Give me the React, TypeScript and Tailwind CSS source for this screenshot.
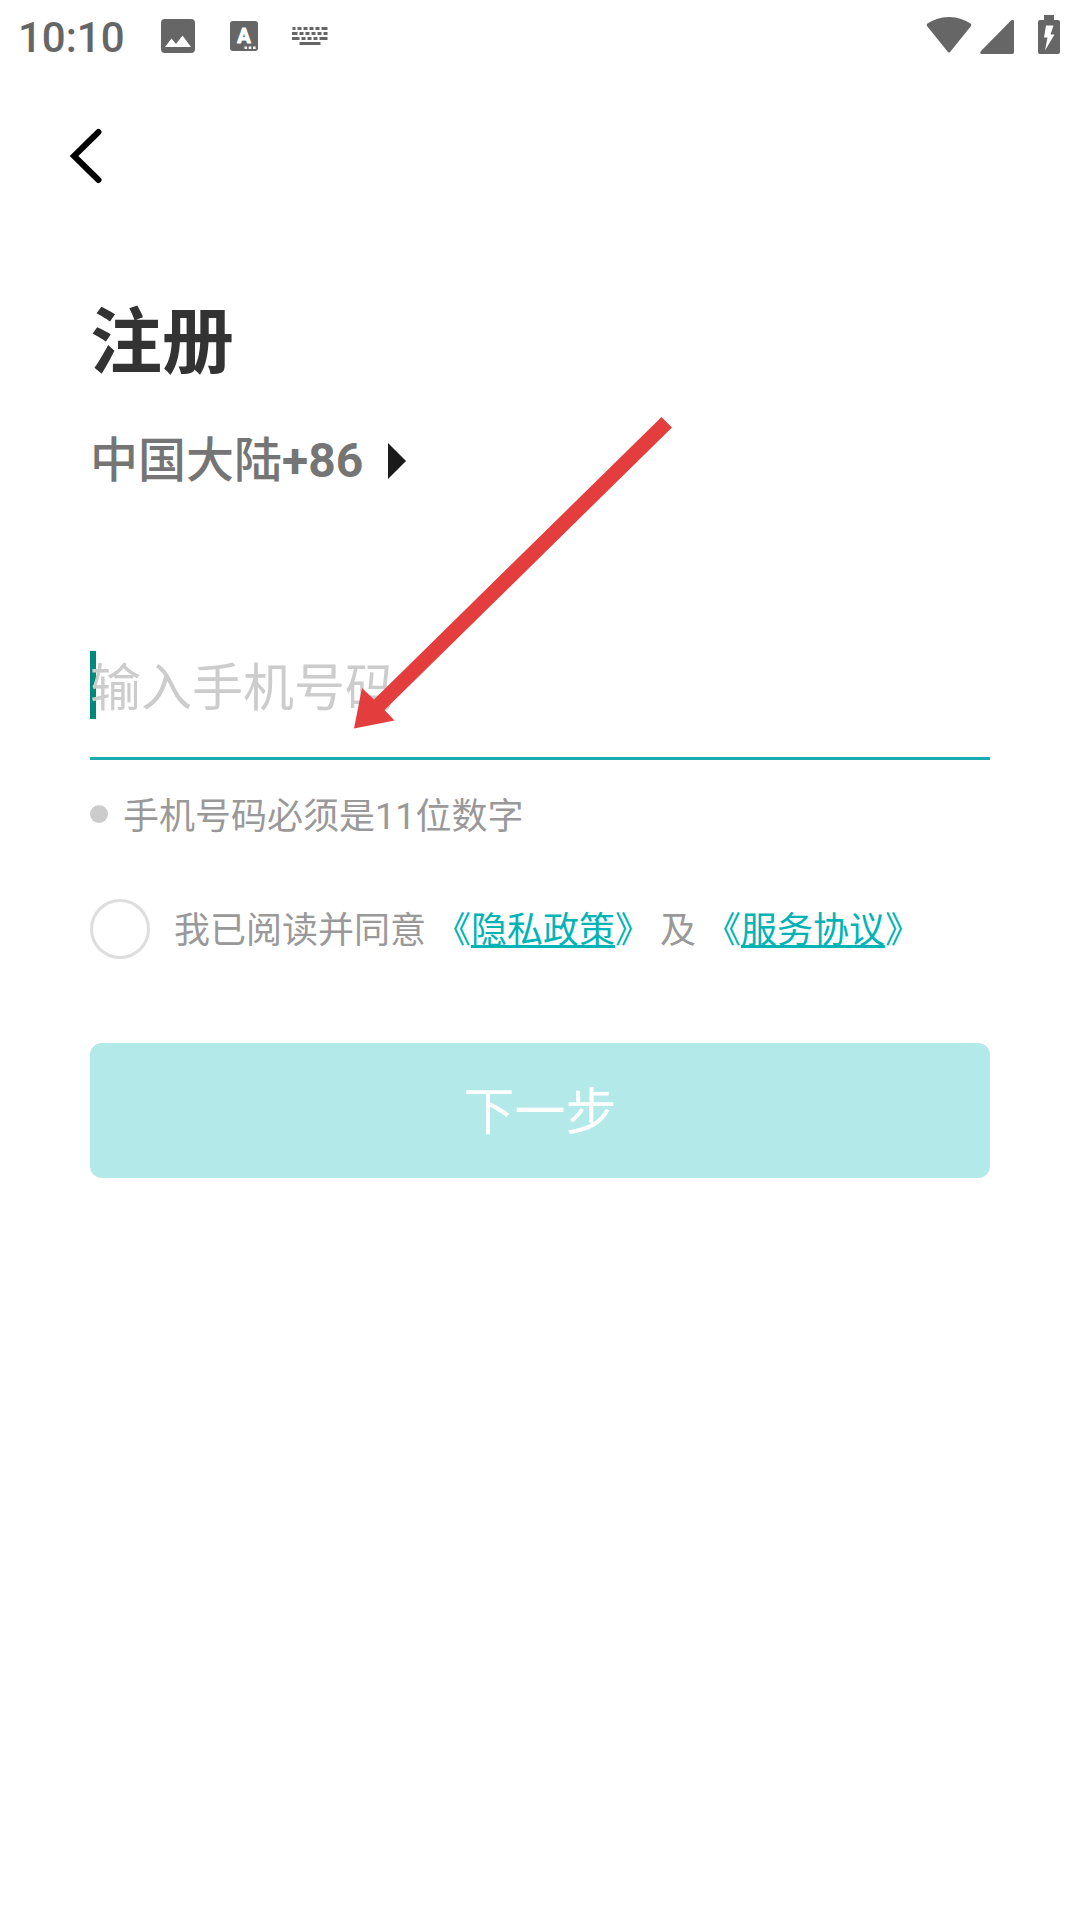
import { useState } from 'react';

function StatusBar() {
  return (
    <div className="flex h-[72px] items-center justify-between pr-5 pl-[18px] text-[#666]">
      <div className="flex items-center">
        <span className="pt-1 text-[42px] leading-[48px] font-medium">10:10</span>
        {/* Picture */}
        <svg className="ml-9 h-[34px] w-[34px]" viewBox="0 0 34 34">
          <rect width="34" height="34" rx="4" fill="currentColor" />
          <path d="M4 28 L10.5 19.5 L15 25 L21.5 16.5 L30 28 Z" fill="#fff" />
        </svg>
        {/* Input language */}
        <svg className="ml-[35px] h-[30px] w-[28px]" viewBox="0 0 28 30">
          <rect width="28" height="30" rx="3" fill="currentColor" />
          <text x="14" y="21.5" textAnchor="middle" fontSize="20" fontWeight="700" fill="#fff" stroke="#fff" strokeLinejoin="round">
            A
          </text>
          <path d="M14.5 25.5h2.6v2.6h-2.6zM18.7 25.5h2.6v2.6h-2.6zM23 25.5h2.6v2.6H23z" fill="#fff" />
        </svg>
        {/* Keyboard */}
        <svg className="ml-[33px] h-[20px] w-[38px]" viewBox="0 0 38 20" fill="none" stroke="currentColor" strokeWidth="3">
          <path d="M1.5 2.5h3M6.5 2.5h4M12.5 2.5h4M18.5 2.5h4M24.5 2.5h4M30.5 2.5h6" />
          <path d="M1 7.5h5.5M8.5 7.5h4M14.5 7.5h4M20.5 7.5h4M26.5 7.5h4M32.5 7.5h4" />
          <path d="M1 12.5h7.5M10.5 12.5h4M16.5 12.5h4M22.5 12.5h4M28.5 12.5h8" />
          <path d="M8.5 17.5h21" />
        </svg>
      </div>
      <div className="flex items-end pb-1">
        <svg className="h-[40px] w-[46px]" viewBox="0 0 46 40">
          <path
            d="M23 3 C14 3 7 6 1.5 9.5 Q0 10.5 1 12 L21.5 37.5 Q23 39.5 24.5 37.5 L45 12 Q46 10.5 44.5 9.5 C39 6 32 3 23 3 Z"
            fill="currentColor"
          />
        </svg>
        <svg className="ml-2 h-[40px] w-[34px]" viewBox="0 0 34 40">
          <path d="M31 6.5 Q34 4.5 34 8 V38 Q34 40 32 40 H2 Q-1 40 1 37 Z" fill="currentColor" />
        </svg>
        <svg className="ml-6 h-[40px] w-[22px]" viewBox="0 0 22 40">
          <path d="M6 1 H16 V6 H20 Q22 6 22 8 V38 Q22 40 20 40 H2 Q0 40 0 38 V8 Q0 6 2 6 H6 Z" fill="currentColor" />
          <path d="M8 11.5 H15.5 L12.5 20.5 H16.5 L7 36.5 L9.5 23.5 H6 Z" fill="#fff" />
        </svg>
      </div>
    </div>
  );
}

export default function App() {
  const [phone, setPhone] = useState('');
  const [agreed, setAgreed] = useState(false);

  return (
    <div className="min-h-screen bg-white font-['Roboto','Noto_Sans_CJK_SC',sans-serif]">
      <StatusBar />

      <header className="flex h-[168px] items-center px-[60px]">
        <button type="button" aria-label="返回" className="p-2">
          <svg className="h-[56px] w-[36px]" viewBox="0 0 36 56" fill="none" stroke="#000" strokeWidth="6" strokeLinecap="round">
            <path d="M30.5 4 L6 28 L30.5 52" />
          </svg>
        </button>
      </header>

      <main className="relative px-[90px] pt-[51px]">
        <h1 className="text-[72px] leading-[104px] font-bold text-[#333]">注册</h1>

        <button type="button" className="mt-9 flex h-[60px] items-center gap-[25px] text-[48px] leading-[60px] text-[#757575]">
          <span className="font-medium">
            中国大陆<b className="font-bold">+86</b>
          </span>
          <svg className="h-[36px] w-[18px]" viewBox="0 0 18 36">
            <path d="M0 0 L18 18 L0 36 Z" fill="#1a1a1a" />
          </svg>
        </button>

        <form onSubmit={(e) => e.preventDefault()}>
          <div className="relative mt-[157px]">
            {/* Text cursor */}
            <span className="absolute top-[3px] left-0 h-[68px] w-[6px] bg-[#00897b]" />
            <input
              type="tel"
              aria-label="手机号码"
              aria-describedby="phone-hint"
              value={phone}
              onChange={(e) => setPhone(e.target.value)}
              placeholder="输入手机号码"
              className="relative block h-28 w-full border-b-3 border-[#1aabb0] bg-transparent pb-7 text-[51px] text-[#333] outline-none placeholder:text-[#ccc]"
            />
          </div>

          <div className="mt-8 flex h-11 items-center gap-[15px] text-[36px] leading-[44px] text-[#999]">
            <span className="h-[18px] w-[18px] rounded-full bg-[#ccc]" />
            <p id="phone-hint" className="pt-1.5">手机号码必须是11位数字</p>
          </div>

          <div className="mt-[63px] flex h-[60px] items-center gap-6 text-[36px] leading-[44px] text-[#999]">
            <input
              id="agree"
              type="checkbox"
              checked={agreed}
              onChange={(e) => setAgreed(e.target.checked)}
              className="h-[60px] w-[60px] shrink-0 appearance-none rounded-full border-3 border-[#ddd] checked:border-[#00b4b6] checked:bg-[#00b4b6]"
            />
            <label htmlFor="agree" className="pt-1">
              我已阅读并同意{' '}
              <span className="text-[#00b4b6]">
                《<a href="#privacy" className="underline">隐私政策</a>》
              </span>{' '}
              及{' '}
              <span className="text-[#00b4b6]">
                《<a href="#terms" className="underline">服务协议</a>》
              </span>
            </label>
          </div>

          <button type="submit" className="mt-[84px] h-[135px] w-full rounded-xl bg-[#b3e9e9] pt-1.5 text-[51px] text-white">
            下一步
          </button>
        </form>

        {/* Arrow pointing at the phone field */}
        <svg className="pointer-events-none absolute top-[176px] left-[354px] h-[314px] w-[318px]" viewBox="0 0 318 314">
          <path d="M307.5 1 L318 11.5 L30.5 294 L40.5 304.5 L0 312.5 L8 272 L20 283.5 Z" fill="#e43d3d" />
        </svg>
      </main>
    </div>
  );
}
